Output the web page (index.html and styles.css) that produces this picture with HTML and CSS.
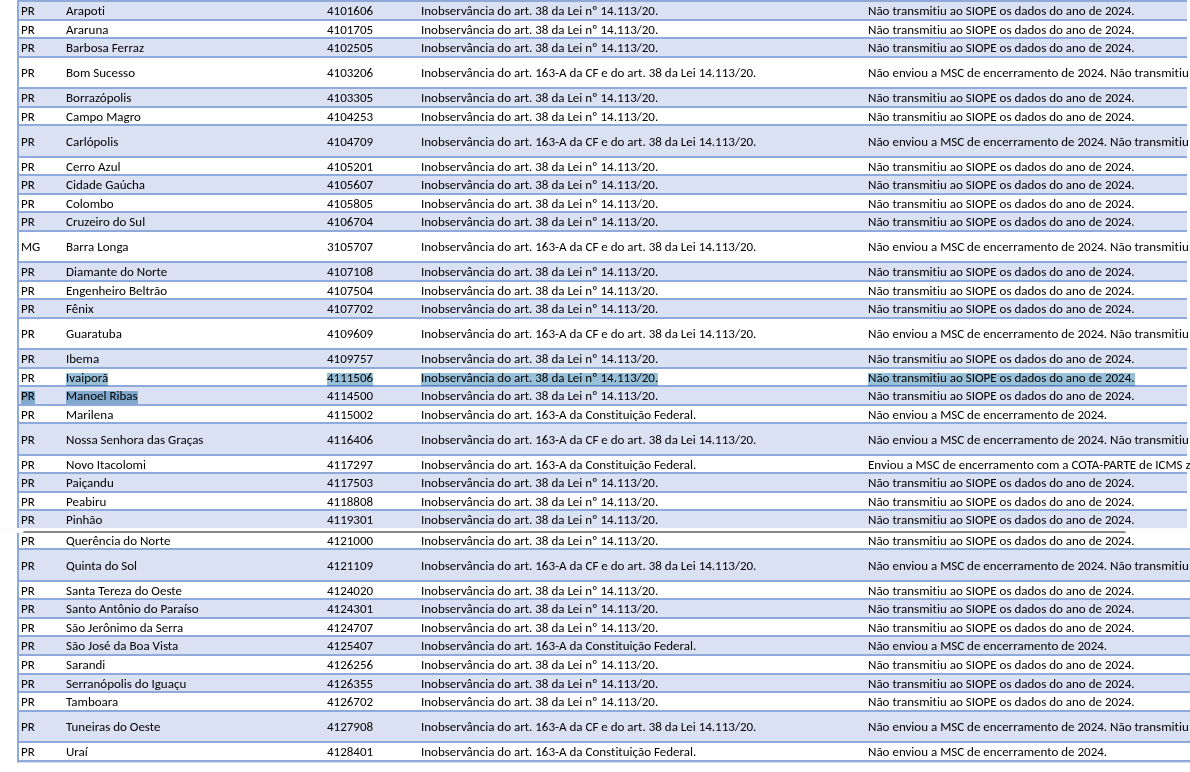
FILE: index.html
```html
<!DOCTYPE html>
<html lang="pt-BR">
<head>
  <meta charset="UTF-8">
  <title>Municípios</title>
  <link rel="stylesheet" href="styles.css">
</head>
<body>
  <div class="page first-page">
    <table class="list">
      <colgroup><col class="uf"><col class="city"><col class="code"><col class="rule"><col></colgroup>
      <tbody>
        <tr><td>PR</td><td>Arapoti</td><td>4101606</td><td>Inobservância do art. 38 da Lei nº 14.113/20.</td><td>Não transmitiu ao SIOPE os dados do ano de 2024.</td></tr>
        <tr class="short"><td>PR</td><td>Araruna</td><td>4101705</td><td>Inobservância do art. 38 da Lei nº 14.113/20.</td><td>Não transmitiu ao SIOPE os dados do ano de 2024.</td></tr>
        <tr><td>PR</td><td>Barbosa Ferraz</td><td>4102505</td><td>Inobservância do art. 38 da Lei nº 14.113/20.</td><td>Não transmitiu ao SIOPE os dados do ano de 2024.</td></tr>
        <tr class="tall"><td>PR</td><td>Bom Sucesso</td><td>4103206</td><td>Inobservância do art. 163-A da CF e do art. 38 da Lei 14.113/20.</td><td>Não enviou a MSC de encerramento de 2024. Não transmitiu</td></tr>
        <tr><td>PR</td><td>Borrazópolis</td><td>4103305</td><td>Inobservância do art. 38 da Lei nº 14.113/20.</td><td>Não transmitiu ao SIOPE os dados do ano de 2024.</td></tr>
        <tr class="short"><td>PR</td><td>Campo Magro</td><td>4104253</td><td>Inobservância do art. 38 da Lei nº 14.113/20.</td><td>Não transmitiu ao SIOPE os dados do ano de 2024.</td></tr>
        <tr class="taller"><td>PR</td><td>Carlópolis</td><td>4104709</td><td>Inobservância do art. 163-A da CF e do art. 38 da Lei 14.113/20.</td><td>Não enviou a MSC de encerramento de 2024. Não transmitiu</td></tr>
        <tr class="short"><td>PR</td><td>Cerro Azul</td><td>4105201</td><td>Inobservância do art. 38 da Lei nº 14.113/20.</td><td>Não transmitiu ao SIOPE os dados do ano de 2024.</td></tr>
        <tr><td>PR</td><td>Cidade Gaúcha</td><td>4105607</td><td>Inobservância do art. 38 da Lei nº 14.113/20.</td><td>Não transmitiu ao SIOPE os dados do ano de 2024.</td></tr>
        <tr class="short"><td>PR</td><td>Colombo</td><td>4105805</td><td>Inobservância do art. 38 da Lei nº 14.113/20.</td><td>Não transmitiu ao SIOPE os dados do ano de 2024.</td></tr>
        <tr><td>PR</td><td>Cruzeiro do Sul</td><td>4106704</td><td>Inobservância do art. 38 da Lei nº 14.113/20.</td><td>Não transmitiu ao SIOPE os dados do ano de 2024.</td></tr>
        <tr class="tall"><td>MG</td><td>Barra Longa</td><td>3105707</td><td>Inobservância do art. 163-A da CF e do art. 38 da Lei 14.113/20.</td><td>Não enviou a MSC de encerramento de 2024. Não transmitiu</td></tr>
        <tr><td>PR</td><td>Diamante do Norte</td><td>4107108</td><td>Inobservância do art. 38 da Lei nº 14.113/20.</td><td>Não transmitiu ao SIOPE os dados do ano de 2024.</td></tr>
        <tr class="short"><td>PR</td><td>Engenheiro Beltrão</td><td>4107504</td><td>Inobservância do art. 38 da Lei nº 14.113/20.</td><td>Não transmitiu ao SIOPE os dados do ano de 2024.</td></tr>
        <tr><td>PR</td><td>Fênix</td><td>4107702</td><td>Inobservância do art. 38 da Lei nº 14.113/20.</td><td>Não transmitiu ao SIOPE os dados do ano de 2024.</td></tr>
        <tr class="tall"><td>PR</td><td>Guaratuba</td><td>4109609</td><td>Inobservância do art. 163-A da CF e do art. 38 da Lei 14.113/20.</td><td>Não enviou a MSC de encerramento de 2024. Não transmitiu</td></tr>
        <tr><td>PR</td><td>Ibema</td><td>4109757</td><td>Inobservância do art. 38 da Lei nº 14.113/20.</td><td>Não transmitiu ao SIOPE os dados do ano de 2024.</td></tr>
        <tr class="short"><td>PR</td><td><mark>Ivaiporã</mark></td><td><mark>4111506</mark></td><td><mark>Inobservância do art. 38 da Lei nº 14.113/20.</mark></td><td><mark>Não transmitiu ao SIOPE os dados do ano de 2024.</mark></td></tr>
        <tr><td><mark>PR</mark></td><td><mark>Manoel Ribas</mark></td><td>4114500</td><td>Inobservância do art. 38 da Lei nº 14.113/20.</td><td>Não transmitiu ao SIOPE os dados do ano de 2024.</td></tr>
        <tr class="short"><td>PR</td><td>Marilena</td><td>4115002</td><td>Inobservância do art. 163-A da Constituição Federal.</td><td>Não enviou a MSC de encerramento de 2024.</td></tr>
        <tr class="taller"><td>PR</td><td>Nossa Senhora das Graças</td><td>4116406</td><td>Inobservância do art. 163-A da CF e do art. 38 da Lei 14.113/20.</td><td>Não enviou a MSC de encerramento de 2024. Não transmitiu</td></tr>
        <tr class="short"><td>PR</td><td>Novo Itacolomi</td><td>4117297</td><td>Inobservância do art. 163-A da Constituição Federal.</td><td>Enviou a MSC de encerramento com a COTA-PARTE de ICMS z</td></tr>
        <tr><td>PR</td><td>Paiçandu</td><td>4117503</td><td>Inobservância do art. 38 da Lei nº 14.113/20.</td><td>Não transmitiu ao SIOPE os dados do ano de 2024.</td></tr>
        <tr class="short"><td>PR</td><td>Peabiru</td><td>4118808</td><td>Inobservância do art. 38 da Lei nº 14.113/20.</td><td>Não transmitiu ao SIOPE os dados do ano de 2024.</td></tr>
        <tr class="last"><td>PR</td><td>Pinhão</td><td>4119301</td><td>Inobservância do art. 38 da Lei nº 14.113/20.</td><td>Não transmitiu ao SIOPE os dados do ano de 2024.</td></tr>
      </tbody>
    </table>
  </div>

  <div class="page-break"></div>

  <div class="page">
    <table class="list continued">
      <colgroup><col class="uf"><col class="city"><col class="code"><col class="rule"><col></colgroup>
      <tbody>
        <tr class="cut"><td>PR</td><td>Querência do Norte</td><td>4121000</td><td>Inobservância do art. 38 da Lei nº 14.113/20.</td><td>Não transmitiu ao SIOPE os dados do ano de 2024.</td></tr>
        <tr class="taller"><td>PR</td><td>Quinta do Sol</td><td>4121109</td><td>Inobservância do art. 163-A da CF e do art. 38 da Lei 14.113/20.</td><td>Não enviou a MSC de encerramento de 2024. Não transmitiu a</td></tr>
        <tr class="short"><td>PR</td><td>Santa Tereza do Oeste</td><td>4124020</td><td>Inobservância do art. 38 da Lei nº 14.113/20.</td><td>Não transmitiu ao SIOPE os dados do ano de 2024.</td></tr>
        <tr><td>PR</td><td>Santo Antônio do Paraíso</td><td>4124301</td><td>Inobservância do art. 38 da Lei nº 14.113/20.</td><td>Não transmitiu ao SIOPE os dados do ano de 2024.</td></tr>
        <tr class="short"><td>PR</td><td>São Jerônimo da Serra</td><td>4124707</td><td>Inobservância do art. 38 da Lei nº 14.113/20.</td><td>Não transmitiu ao SIOPE os dados do ano de 2024.</td></tr>
        <tr><td>PR</td><td>São José da Boa Vista</td><td>4125407</td><td>Inobservância do art. 163-A da Constituição Federal.</td><td>Não enviou a MSC de encerramento de 2024.</td></tr>
        <tr><td>PR</td><td>Sarandi</td><td>4126256</td><td>Inobservância do art. 38 da Lei nº 14.113/20.</td><td>Não transmitiu ao SIOPE os dados do ano de 2024.</td></tr>
        <tr class="short"><td>PR</td><td>Serranópolis do Iguaçu</td><td>4126355</td><td>Inobservância do art. 38 da Lei nº 14.113/20.</td><td>Não transmitiu ao SIOPE os dados do ano de 2024.</td></tr>
        <tr><td>PR</td><td>Tamboara</td><td>4126702</td><td>Inobservância do art. 38 da Lei nº 14.113/20.</td><td>Não transmitiu ao SIOPE os dados do ano de 2024.</td></tr>
        <tr class="tall"><td>PR</td><td>Tuneiras do Oeste</td><td>4127908</td><td>Inobservância do art. 163-A da CF e do art. 38 da Lei 14.113/20.</td><td>Não enviou a MSC de encerramento de 2024. Não transmitiu a</td></tr>
        <tr><td>PR</td><td>Uraí</td><td>4128401</td><td>Inobservância do art. 163-A da Constituição Federal.</td><td>Não enviou a MSC de encerramento de 2024.</td></tr>
      </tbody>
    </table>
  </div>
</body>
</html>
```
FILE: styles.css
```css
body {
  margin: 0;
  overflow-x: hidden;
  background-color: #ffffff;
  color: #000000;
  font-family: Calibri, Carlito, Lato, sans-serif;
  font-size: 13px;
  line-height: 14px;
  font-variant-ligatures: none;
}

.page {
  padding-left: 17px;
}

.first-page {
  padding-right: 3px;
}

.list {
  width: 100%;
  table-layout: fixed;
  border-collapse: separate;
  border-spacing: 0;
  border-top: 2px solid #8eaadb;
  border-left: 2px solid #8eaadb;
}

/* column widths, the last one takes what is left */
.uf {
  width: 45px;
}

.city {
  width: 261px;
}

.code {
  width: 94px;
}

.rule {
  width: 447px;
}

td {
  box-sizing: border-box;
  height: 19px;
  padding: 1px 0 0 2px;
  border-bottom: 2px solid #8eaadb;
  white-space: nowrap;
  vertical-align: middle;
}

.short td {
  height: 18px;
}

.tall td {
  height: 31px;
}

.taller td {
  height: 32px;
}

/* striped rows */
.list tr:nth-child(odd) td {
  background-color: #d9e1f2;
}

.continued tr:nth-child(odd) td {
  background-color: #ffffff;
}

.continued tr:nth-child(even) td {
  background-color: #d9e1f2;
}

/* rows next to the page break */
.last td {
  height: 17px;
  border-bottom: none;
}

.continued {
  border-top: none;
  border-bottom: 1px solid #d9e1f2;
}

.cut td {
  height: 17px;
}

/* selected text */
mark {
  padding-bottom: 1px;
  background: linear-gradient(transparent 3px, #98c0d9 3px);
  color: inherit;
  mix-blend-mode: multiply;
}

.page-break {
  box-sizing: border-box;
  height: 5px;
  padding: 3px 64px 0 23px;
  background-color: #fcfcfc;
}

.page-break::before {
  content: "";
  display: block;
  height: 2px;
  background-color: #888888;
  border-radius: 2px 2px 0 0;
}
```
